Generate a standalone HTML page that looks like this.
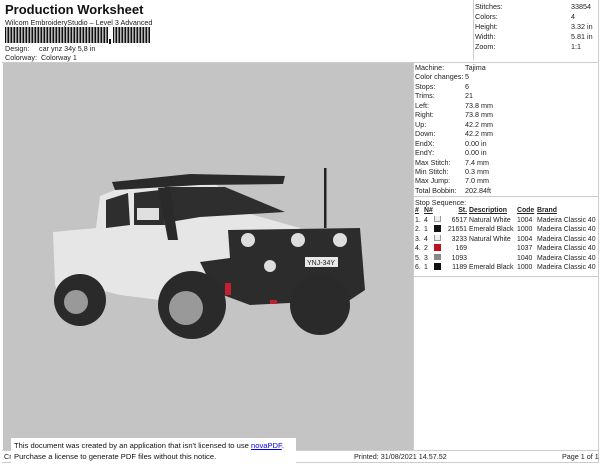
<!DOCTYPE html>
<html><head><style>
body{margin:0;width:600px;height:464px;background:#fff;font-family:"Liberation Sans",sans-serif;color:#222;position:relative;overflow:hidden}
.a{position:absolute;white-space:nowrap;font-size:7.2px}
.r{white-space:nowrap}
.r td{padding:0;height:9.5px;font-size:6.9px;line-height:9.5px;white-space:nowrap;overflow:hidden}
.r td span{vertical-align:middle;margin-top:-2px}
</style></head><body>
<div class="a" style="left:5px;top:2px;font-size:13px;font-weight:bold;color:#111">Production Worksheet</div>
<div class="a" style="left:5px;top:18px">Wilcom EmbroideryStudio – Level 3 Advanced</div>
<svg style="position:absolute;left:5px;top:27px" width="150" height="18">
<defs><pattern id="bc" width="3" height="16" patternUnits="userSpaceOnUse"><rect width="1.3" height="16" fill="#111"/><rect x="2" width="0.6" height="16" fill="#111"/></pattern></defs>
<rect x="0" y="0" width="103" height="16" fill="url(#bc)"/>
<rect x="108" y="0" width="37" height="16" fill="url(#bc)"/>
<rect x="104" y="12" width="2" height="5" fill="#111"/>
</svg>
<div class="a" style="left:5px;top:44px">Design:</div><div class="a" style="left:39px;top:44px">car ynz 34y 5,8 in</div>
<div class="a" style="left:5px;top:53px">Colorway:&nbsp; Colorway 1</div>
<div style="position:absolute;left:473px;top:0;width:1px;height:60px;background:#ccc"></div>
<div style="position:absolute;left:598px;top:0;width:1px;height:462px;background:#ccc"></div>
<div style="position:absolute;left:2px;top:62px;width:597px;height:1px;background:#ccc"></div>
<div class="a" style="left:475px;top:2px;line-height:10px">Stitches:<br>Colors:<br>Height:<br>Width:<br>Zoom:</div>
<div class="a" style="left:571px;top:2px;line-height:10px">33854<br>4<br>3.32 in<br>5.81 in<br>1:1</div>
<div style="position:absolute;left:3px;top:63px;width:410px;height:387px;background:#c4c4c4"></div>
<svg style="position:absolute;left:3px;top:63px" width="410" height="387" viewBox="3 63 410 387">
<polygon points="53,232 96,228 100,196 120,188 215,184 250,214 300,228 300,250 230,262 215,300 160,300 120,295 100,290 60,295 55,285" fill="#e6e6e6"/>
<polygon points="112,182 190,174 285,176 283,184 200,185 115,190" fill="#2a2a2a"/>
<polygon points="106,200 128,193 130,225 106,228" fill="#2e2e2e"/>
<polygon points="134,193 160,190 165,225 134,225" fill="#2e2e2e"/>
<polygon points="165,187 225,187 285,212 200,217 170,222" fill="#2e2e2e"/>
<rect x="137" y="208" width="22" height="12" fill="#e0e0e0"/>
<polygon points="158,188 170,187 178,240 168,240" fill="#2a2a2a"/>
<polygon points="228,230 360,228 365,290 350,300 250,305 215,292 200,262 230,258" fill="#2c2c2c"/>
<circle cx="248" cy="240" r="7" fill="#ddd"/><circle cx="298" cy="240" r="7" fill="#ddd"/><circle cx="340" cy="240" r="7" fill="#ddd"/>
<circle cx="270" cy="266" r="6" fill="#ddd"/>
<rect x="305" y="257" width="33" height="10" fill="#e8e8e8"/>
<text x="307" y="265" font-size="7" font-family="Liberation Sans" fill="#222">YNJ-34Y</text>
<rect x="324" y="168" width="2.5" height="60" fill="#222"/>
<rect x="225" y="283" width="6" height="12" fill="#c02030"/>
<rect x="270" y="300" width="7" height="4" fill="#c02030"/>
<circle cx="80" cy="300" r="26" fill="#2a2a2a"/><circle cx="76" cy="302" r="12" fill="#999"/>
<circle cx="192" cy="305" r="34" fill="#2a2a2a"/><circle cx="186" cy="308" r="17" fill="#999"/>
<ellipse cx="320" cy="305" rx="30" ry="30" fill="#2a2a2a"/>
</svg>
<div style="position:absolute;left:413px;top:63px;width:1px;height:387px;background:#ccc"></div>
<div class="a" style="left:415px;top:63px;line-height:9.45px">Machine:<br>Color changes:<br>Stops:<br>Trims:<br>Left:<br>Right:<br>Up:<br>Down:<br>EndX:<br>EndY:<br>Max Stitch:<br>Min Stitch:<br>Max Jump:<br>Total Bobbin:</div>
<div class="a" style="left:465px;top:63px;line-height:9.45px">Tajima<br>5<br>6<br>21<br>73.8 mm<br>73.8 mm<br>42.2 mm<br>42.2 mm<br>0.00 in<br>0.00 in<br>7.4 mm<br>0.3 mm<br>7.0 mm<br>202.84ft</div>
<div style="position:absolute;left:413px;top:196px;width:186px;height:1px;background:#ccc"></div>
<div class="a" style="left:415px;top:198px">Stop Sequence:</div>
<table class="r" style="position:absolute;left:415px;top:206px;border-collapse:collapse;table-layout:fixed;width:184px">
<col style="width:9px"><col style="width:10px"><col style="width:11px"><col style="width:22px"><col style="width:50px"><col style="width:20px"><col style="width:62px">
<tr style="font-weight:bold;text-decoration:underline"><td>#</td><td>N#</td><td></td><td style="text-align:right">St.</td><td style="padding-left:2px">Description</td><td>Code</td><td>Brand</td></tr>
<tr><td>1.</td><td>4</td><td><span style="display:inline-block;width:5px;height:5px;background:#eee;border:1px solid #999"></span></td><td style="text-align:right">6517</td><td style="padding-left:2px">Natural White</td><td>1004</td><td>Madeira Classic 40</td></tr>
<tr><td>2.</td><td>1</td><td><span style="display:inline-block;width:7px;height:7px;background:#111"></span></td><td style="text-align:right">21651</td><td style="padding-left:2px">Emerald Black</td><td>1000</td><td>Madeira Classic 40</td></tr>
<tr><td>3.</td><td>4</td><td><span style="display:inline-block;width:5px;height:5px;background:#eee;border:1px solid #999"></span></td><td style="text-align:right">3233</td><td style="padding-left:2px">Natural White</td><td>1004</td><td>Madeira Classic 40</td></tr>
<tr><td>4.</td><td>2</td><td><span style="display:inline-block;width:7px;height:7px;background:#c01020"></span></td><td style="text-align:right">169</td><td></td><td>1037</td><td>Madeira Classic 40</td></tr>
<tr><td>5.</td><td>3</td><td><span style="display:inline-block;width:7px;height:7px;background:#888"></span></td><td style="text-align:right">1093</td><td></td><td>1040</td><td>Madeira Classic 40</td></tr>
<tr><td>6.</td><td>1</td><td><span style="display:inline-block;width:7px;height:7px;background:#111"></span></td><td style="text-align:right">1189</td><td style="padding-left:2px">Emerald Black</td><td>1000</td><td>Madeira Classic 40</td></tr>
</table>
<div style="position:absolute;left:413px;top:276px;width:186px;height:1px;background:#ccc"></div>
<div style="position:absolute;left:2px;top:450px;width:597px;height:1px;background:#ccc"></div>
<div style="position:absolute;left:2px;top:462px;width:597px;height:1px;background:#ccc"></div>
<div class="a" style="left:4px;top:452px">Cr</div>
<div class="a" style="left:354px;top:452px">Printed: 31/08/2021 14.57.52</div>
<div class="a" style="left:562px;top:452px">Page 1 of 1</div>
<div style="position:absolute;left:11px;top:438px;width:285px;height:26px;background:#fff"></div>
<div class="a" style="left:14px;top:440px;font-size:7.6px;line-height:11px;color:#111">This document was created by an application that isn't licensed to use <span style="color:#00e;text-decoration:underline">novaPDF</span>.<br>Purchase a license to generate PDF files without this notice.</div>
</body></html>
